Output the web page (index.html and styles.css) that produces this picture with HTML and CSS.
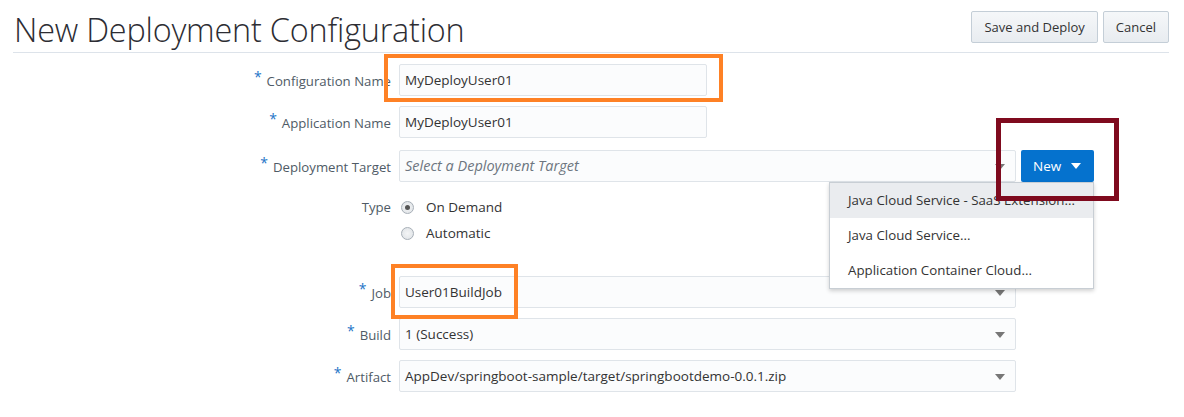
FILE: index.html
```html
<!DOCTYPE html>
<html>
<head>
<meta charset="utf-8">
<link rel="stylesheet" href="styles.css">
</head>
<body>
<div class="page">
  <header class="header">
    <h1 class="title">New Deployment Configuration</h1>
    <div class="actions">
      <button class="btn">Save and Deploy</button>
      <button class="btn">Cancel</button>
    </div>
  </header>

  <form class="form">
    <div class="row">
      <label class="label"><span class="req">*</span>Configuration Name</label>
      <div class="field"><div class="input text">MyDeployUser01</div></div>
    </div>
    <div class="row">
      <label class="label"><span class="req">*</span>Application Name</label>
      <div class="field"><div class="input text">MyDeployUser01</div></div>
    </div>
    <div class="row target-row">
      <label class="label"><span class="req">*</span>Deployment Target</label>
      <div class="field target">
        <div class="input select placeholder">Select a Deployment Target<span class="arrow"></span></div>
        <div class="new-wrap">
          <button class="btn-new" type="button">New<span class="caret"></span></button>
          <ul class="menu">
            <li class="item active">Java Cloud Service - SaaS Extension...</li>
            <li class="item">Java Cloud Service...</li>
            <li class="item">Application Container Cloud...</li>
          </ul>
        </div>
      </div>
    </div>
    <div class="row type-row">
      <label class="label type-label">Type</label>
      <div class="radios">
        <div class="radio-line"><span class="radio checked"></span>On Demand</div>
        <div class="radio-line"><span class="radio"></span>Automatic</div>
      </div>
    </div>
    <div class="row job-row">
      <label class="label"><span class="req">*</span>Job</label>
      <div class="field"><div class="input select">User01BuildJob<span class="arrow"></span></div></div>
    </div>
    <div class="row">
      <label class="label"><span class="req">*</span>Build</label>
      <div class="field"><div class="input select">1 (Success)<span class="arrow"></span></div></div>
    </div>
    <div class="row">
      <label class="label"><span class="req">*</span>Artifact</label>
      <div class="field"><div class="input select">AppDev/springboot-sample/target/springbootdemo-0.0.1.zip<span class="arrow"></span></div></div>
    </div>
  </form>

  <div class="mark mark-config"></div>
  <div class="mark mark-job"></div>
  <div class="mark-red"></div>
</div>
</body>
</html>
```

FILE: styles.css
```css
* { box-sizing: border-box; }
html, body { margin: 0; padding: 0; background: #fff; }
body {
  font-family: "Open Sans", "Noto Sans", "DejaVu Sans", sans-serif;
  font-size: 13px;
  color: #333;
}
.page { position: relative; width: 1184px; height: 417px; overflow: hidden; }

.header {
  display: flex;
  justify-content: space-between;
  align-items: flex-start;
  margin: 0 15px 0 13px;
  height: 53px;
  border-bottom: 1px solid #dde3ea;
}
.title {
  margin: 9px 0 0 1px;
  font-family: "Open Sans", sans-serif;
  font-weight: 300;
  font-size: 32.4px;
  line-height: 40px;
  color: #2d2d33;
  letter-spacing: -0.2px;
}
.actions { display: flex; gap: 5px; margin-top: 11px; }
.btn {
  height: 32px;
  padding: 0 12px;
  font-family: inherit;
  font-size: 13px;
  color: #333;
  background: linear-gradient(#f5f7f9, #e8ecf0);
  border: 1px solid #c4ced7;
  border-radius: 2px;
}

.form { display: flex; flex-direction: column; gap: 10px; padding-top: 11px; }
.row { display: grid; grid-template-columns: 391px 1fr; column-gap: 8px; align-items: center; }
.label { text-align: right; color: #4f5b66; font-size: 13.2px; white-space: nowrap; }
.req { color: #2474c7; font-size: 14px; margin-right: 5px; position: relative; top: -4px; }
.field { display: flex; align-items: center; }
.input {
  height: 32px;
  line-height: 30px;
  padding: 0 5px;
  background: #fbfcfd;
  border: 1px solid #dfe4e9;
  border-radius: 2px;
  color: #333;
  font-size: 13.5px;
  white-space: nowrap;
}
.text { width: 308px; }
.select { width: 617px; position: relative; }
.placeholder { font-style: italic; color: #6d7680; font-size: 14.5px; }
.arrow {
  position: absolute;
  right: 10px;
  top: 13px;
  width: 0; height: 0;
  border-left: 5px solid transparent;
  border-right: 5px solid transparent;
  border-top: 6px solid #777;
}
.target-row { margin-top: 2px; }
.target { gap: 5px; }
.new-wrap { position: relative; }
.btn-new {
  display: flex; align-items: center;
  height: 32px;
  width: 73px;
  padding: 0 0 0 12px;
  background: #0572ce;
  color: #fff;
  border: 0;
  border-radius: 2px;
  font-family: inherit;
  font-size: 13.5px;
}
.caret {
  margin-left: 10px;
  width: 0; height: 0;
  border-left: 5px solid transparent;
  border-right: 5px solid transparent;
  border-top: 6px solid #fff;
}
.menu {
  position: absolute;
  right: 0;
  top: 32px;
  width: 265px;
  margin: 0;
  padding: 0;
  list-style: none;
  background: #fff;
  border: 1px solid #c8ced4;
  box-shadow: 0 2px 4px rgba(0,0,0,0.18);
  z-index: 2;
}
.item {
  height: 35px;
  line-height: 35px;
  padding: 0 14px 0 18px;
  white-space: nowrap;
  overflow: hidden;
  text-overflow: ellipsis;
  color: #333;
  font-size: 13.3px;
}
.item.active { background: #eaecef; }

.type-row { align-items: start; margin-top: 2px; }
.type-label { line-height: 26px; }
.radios { display: flex; flex-direction: column; }
.radio-line { display: flex; align-items: center; height: 26px; color: #333; font-size: 13.5px; }
.radio {
  width: 13px; height: 13px;
  margin: 0 12px 0 2px;
  border-radius: 50%;
  border: 1px solid #a7afb7;
  background: radial-gradient(#f4f5f6, #dde1e5);
  position: relative;
}
.radio.checked::after {
  content: "";
  position: absolute;
  left: 3px; top: 3px;
  width: 5px; height: 5px;
  border-radius: 50%;
  background: #555;
}
.job-row { margin-top: 20px; }

.mark { position: absolute; border: 4px solid #fe8125; z-index: 3; }
.mark-config { left: 384px; top: 54px; width: 339px; height: 48px; }
.mark-job { left: 391px; top: 264px; width: 127px; height: 55px; }
.mark-red {
  position: absolute;
  left: 996px; top: 118px;
  width: 123px; height: 83px;
  border: 5px solid #7f0a1e;
  z-index: 3;
}
```
